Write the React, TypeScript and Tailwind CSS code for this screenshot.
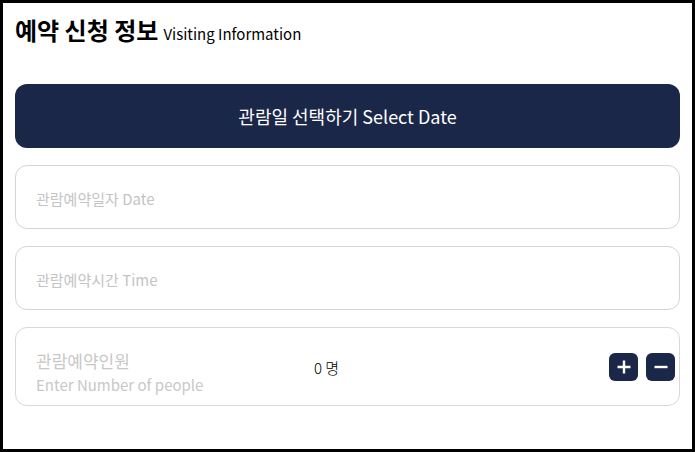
const fontStack = {
  fontFamily: '"Noto Sans CJK KR", "Noto Sans", sans-serif',
};

const PlusIcon = () => (
  <svg width="16" height="16" viewBox="0 0 16 16" fill="none">
    <path d="M8 1.5v13M1.5 8h13" stroke="white" strokeWidth="2.4" />
  </svg>
);

const MinusIcon = () => (
  <svg width="16" height="16" viewBox="0 0 16 16" fill="none">
    <path d="M1.5 8h13" stroke="white" strokeWidth="2.4" />
  </svg>
);

const Field = ({ label }: { label: string }) => (
  <div className="mt-[17px] flex h-16 items-center rounded-xl border border-[#d4d4d4] pl-5 pt-1 text-[15px] text-[#c4c4c4]">
    {label}
  </div>
);

const App = () => {
  return (
    <div
      className="h-[452px] w-[695px] border-[3px] border-black bg-white px-3"
      style={fontStack}
    >
      <div className="flex items-baseline gap-[5px] pt-[11px] leading-8">
        <h1 className="text-[24px] font-bold text-black">예약 신청 정보</h1>
        <span className="text-[15px] text-black">Visiting Information</span>
      </div>

      <button className="mt-[34px] flex h-16 w-full items-center justify-center rounded-xl bg-[#1b2749] text-[18px] text-white">
        관람일 선택하기 Select Date
      </button>

      <Field label="관람예약일자 Date" />
      <Field label="관람예약시간 Time" />

      <div className="mt-[17px] flex h-[79px] items-center rounded-xl border border-[#d8d8d8] pl-5 pr-1">
        <div className="flex w-[278px] flex-col pt-[12px] text-[#c8c8c8]">
          <span className="text-[17px] leading-6">관람예약인원</span>
          <span className="text-[15px] leading-6">Enter Number of people</span>
        </div>
        <span className="pt-1 text-[15px] font-light text-black">0 명</span>
        <div className="ml-auto flex gap-2">
          <button className="flex h-7 w-[29px] items-center justify-center rounded-md bg-[#1b2749]">
            <PlusIcon />
          </button>
          <button className="flex h-7 w-[29px] items-center justify-center rounded-md bg-[#1b2749]">
            <MinusIcon />
          </button>
        </div>
      </div>
    </div>
  );
};

export default App;
